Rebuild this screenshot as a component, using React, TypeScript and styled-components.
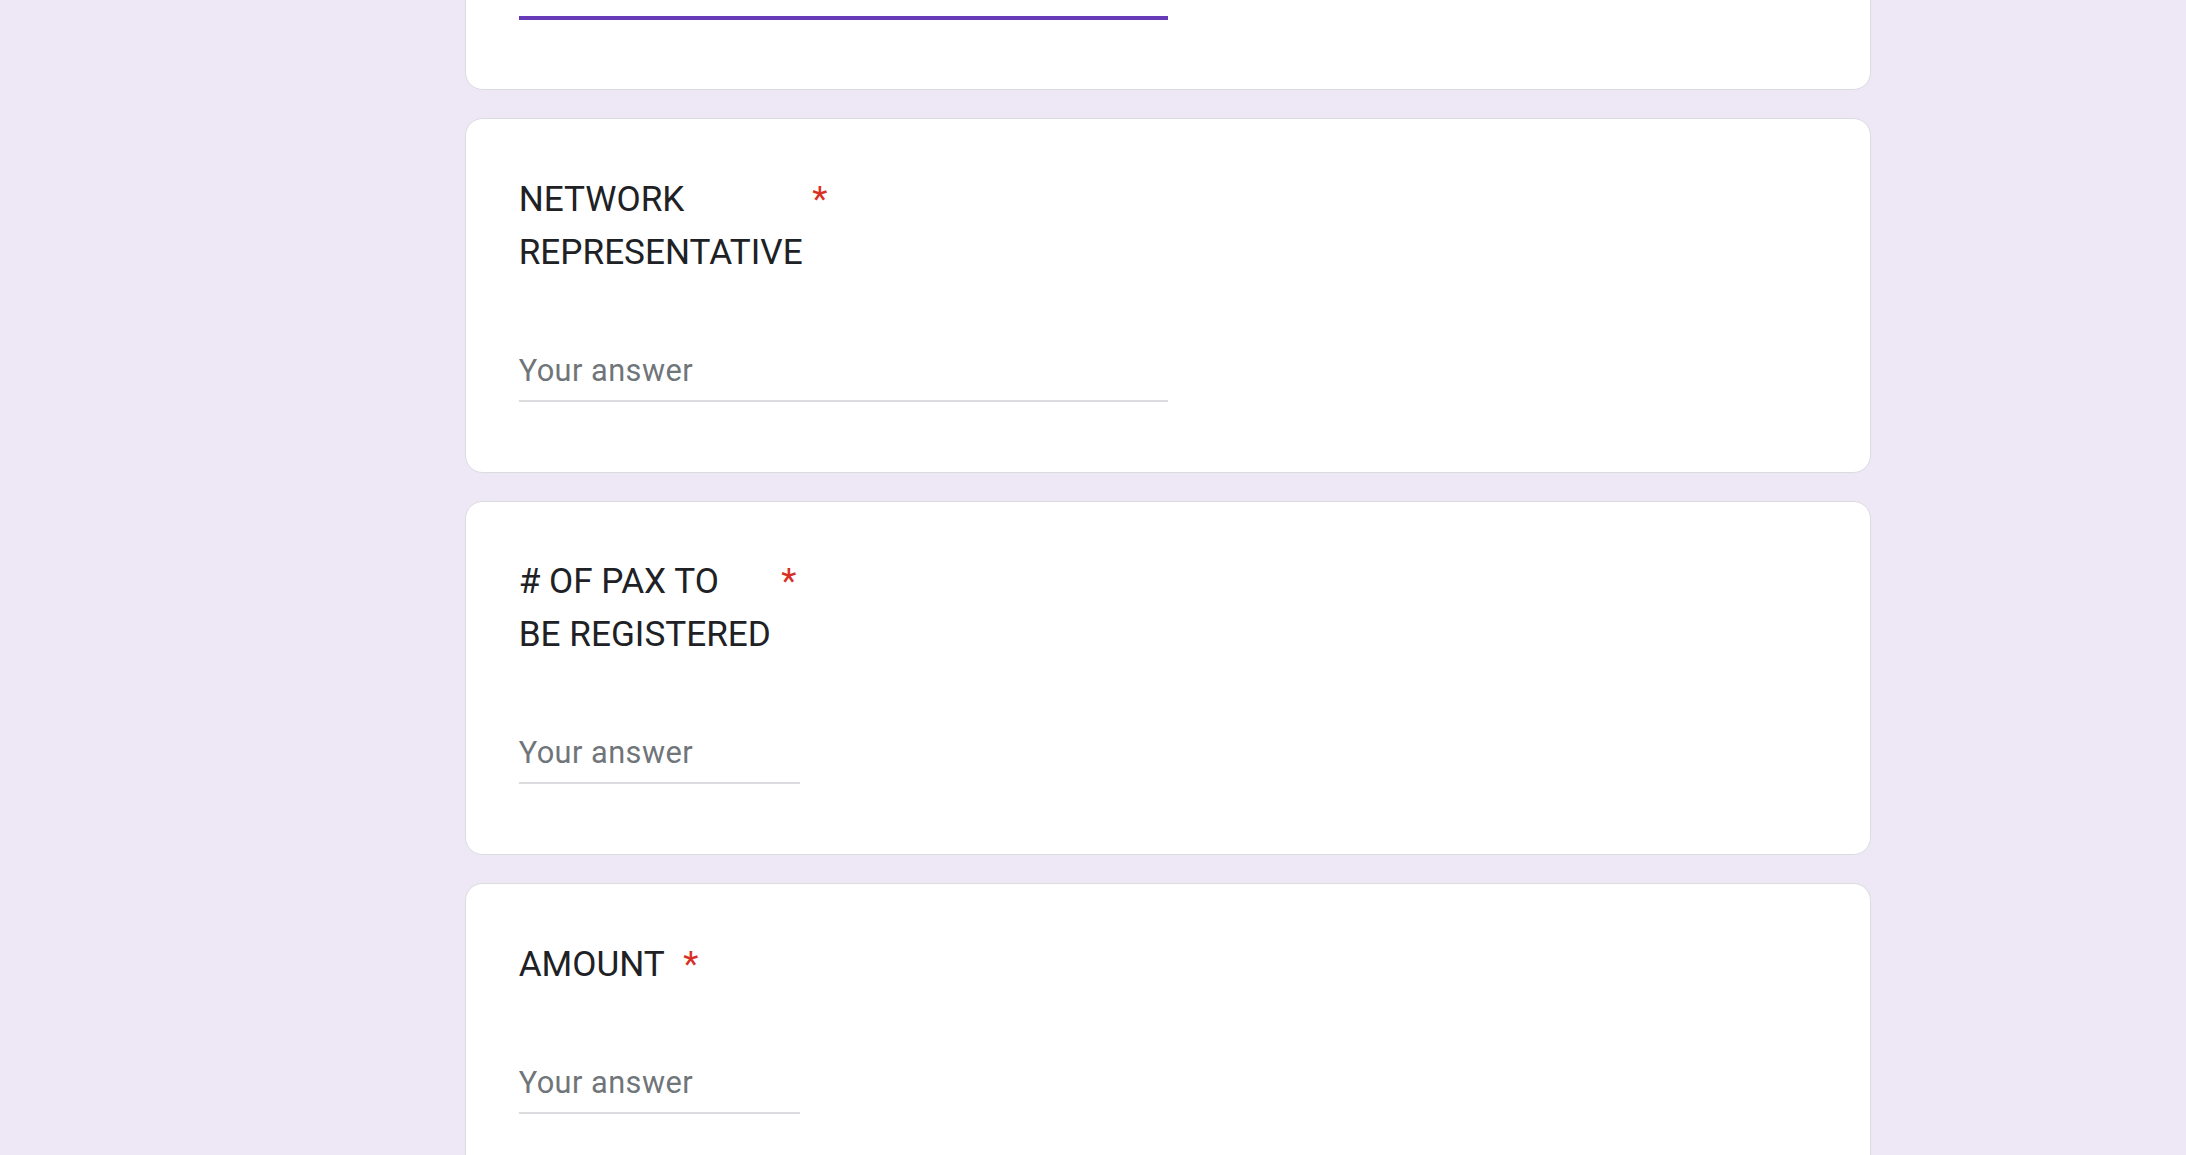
import React from "react";
import styled, { createGlobalStyle } from "styled-components";

const GlobalStyle = createGlobalStyle`
  html, body {
    margin: 0;
    padding: 0;
    overflow: hidden;
    background: #ede7f6;
  }
  body {
    font-family: Roboto, "Noto Sans", "Liberation Sans", Arial, sans-serif;
  }
`;

const Page = styled.main`
  display: flex;
  flex-direction: column;
  gap: 28px;
  width: 1406px;
  margin: -158.3px 0 0 465px;
`;

const Card = styled.section`
  display: flex;
  flex-direction: column;
  background: #ffffff;
  border: 1px solid #dadce0;
  border-radius: 17.6px;
  padding: 52.7px;
`;

const Header = styled.div`
  display: flex;
  align-items: flex-start;
  padding-top: 1px;
  font-size: 35.15px;
  line-height: 52.7px;
  color: #202124;
  font-weight: 400;
`;

const Title = styled.div<{ $width?: number }>`
  flex: none;
  white-space: nowrap;
  ${(p) => (p.$width ? `width: ${p.$width}px;` : "")}
`;

const Required = styled.span`
  flex: none;
  padding-left: calc(0.25em + 1px);
  white-space: pre;
  color: #d93025;
`;

const AnswerField = styled.div<{ $width: number; $afterTitle: boolean }>`
  position: relative;
  width: ${(p) => p.$width}px;
  height: 59px;
  margin-top: ${(p) => (p.$afterTitle ? "62.4px" : "63.4px")};
  margin-bottom: 17px;
  border-bottom: 2.2px solid #dadce0;
  font-size: 30.76px;
  line-height: 59px;
  letter-spacing: 0.45px;
  color: #70757a;
`;

const FocusBar = styled.span`
  position: absolute;
  left: 0;
  right: 0;
  bottom: -2.2px;
  height: 4.4px;
  background: #673ab7;
`;

type Question = {
  lines?: string[];
  titleWidth?: number;
  fieldWidth: number;
  focused?: boolean;
};

const questions: Question[] = [
  { fieldWidth: 649, focused: true },
  { lines: ["NETWORK", "REPRESENTATIVE"], titleWidth: 275, fieldWidth: 649 },
  { lines: ["# OF PAX TO", "BE REGISTERED"], titleWidth: 244, fieldWidth: 281 },
  { lines: ["AMOUNT"], fieldWidth: 281 },
];

export default function App() {
  return (
    <>
      <GlobalStyle />
      <Page>
        {questions.map((q, i) => (
          <Card key={i}>
            {q.lines && (
              <Header role="heading">
                <Title $width={q.titleWidth}>
                  {q.lines.map((l, j) => (
                    <React.Fragment key={j}>
                      {j > 0 && <br />}
                      {l}
                    </React.Fragment>
                  ))}
                </Title>
                <Required aria-label="Required question">{" *"}</Required>
              </Header>
            )}
            <AnswerField $width={q.fieldWidth} $afterTitle={!!q.lines}>
              {q.focused ? null : "Your answer"}
              {q.focused && <FocusBar />}
            </AnswerField>
          </Card>
        ))}
      </Page>
    </>
  );
}
